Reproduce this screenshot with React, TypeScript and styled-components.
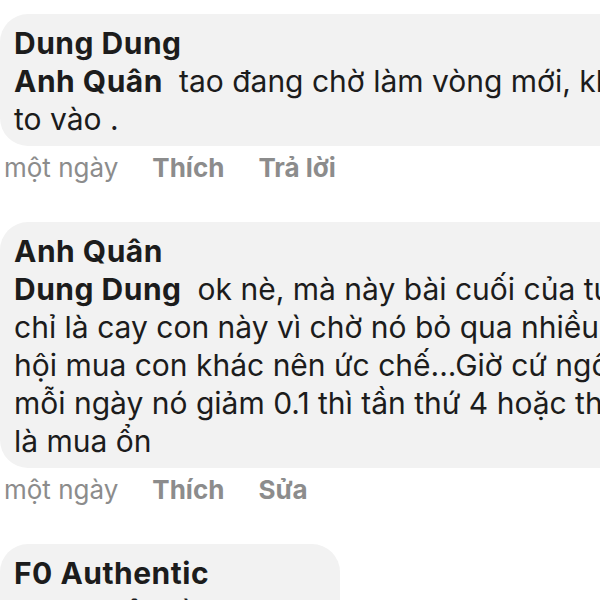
import React from 'react'
import styled, { createGlobalStyle } from 'styled-components'

const Global = createGlobalStyle`
  html, body { margin:0; padding:0; background:#fff; overflow:hidden; }
  body { font-family: Inter, "Noto Sans", sans-serif; color:#1c1c1c; }
`

type Comment = {
  author: string
  tag: string
  lines: string[]
  action: string
  width?: number
}

const comments: Comment[] = [
  {
    author: 'Dung Dung',
    tag: 'Anh Quân',
    lines: ['tao đang chờ làm vòng mới, khi nào có', 'to vào .'],
    action: 'Trả lời',
  },
  {
    author: 'Anh Quân',
    tag: 'Dung Dung',
    lines: [
      'ok nè, mà này bài cuối của tuần',
      'chỉ là cay con này vì chờ nó bỏ qua nhiều cơ',
      'hội mua con khác nên ức chế...Giờ cứ ngồi đợi',
      'mỗi ngày nó giảm 0.1 thì tần thứ 4 hoặc thứ 5',
      'là mua ổn',
    ],
    action: 'Sửa',
  },
  {
    author: 'F0 Authentic',
    tag: 'Anh Quân',
    lines: ['ừ'],
    action: 'Trả lời',
    width: 340,
  },
]

const List = styled.div`
  display:flex;
  flex-direction:column;
  padding-top:14px;
  gap:34px;
`

const Item = styled.div`
  display:flex;
  flex-direction:column;
`

const Bubble = styled.div<{ $w?: number }>`
  width:${p => (p.$w ? `${p.$w}px` : '800px')};
  box-sizing:border-box;
  background:#f2f2f2;
  border-radius:28px;
  padding:10px 14px 8px;
  font-size:30px;
  line-height:38px;
`

const Name = styled.div`
  font-weight:700;
  letter-spacing:0.5px;
  white-space:nowrap;
`

const Line = styled.div`
  white-space:nowrap;
`

const Tag = styled.span`
  font-weight:700;
  letter-spacing:0.5px;
  margin-right:16px;
`

const Meta = styled.div`
  display:flex;
  gap:34px;
  padding-left:4px;
  font-size:26px;
  line-height:40px;
  color:#8c8c8c;
  margin-top:2px;
`

const Action = styled.span`
  font-weight:700;
`

export default function App() {
  return (
    <>
      <Global />
      <List>
        {comments.map((c, i) => (
          <Item key={i}>
            <Bubble $w={c.width}>
              <Name>{c.author}</Name>
              {c.lines.map((l, j) => (
                <Line key={j}>
                  {j === 0 && <Tag>{c.tag}</Tag>}
                  {l}
                </Line>
              ))}
            </Bubble>
            <Meta>
              <span>một ngày</span>
              <Action>Thích</Action>
              <Action>{c.action}</Action>
            </Meta>
          </Item>
        ))}
      </List>
    </>
  )
}
